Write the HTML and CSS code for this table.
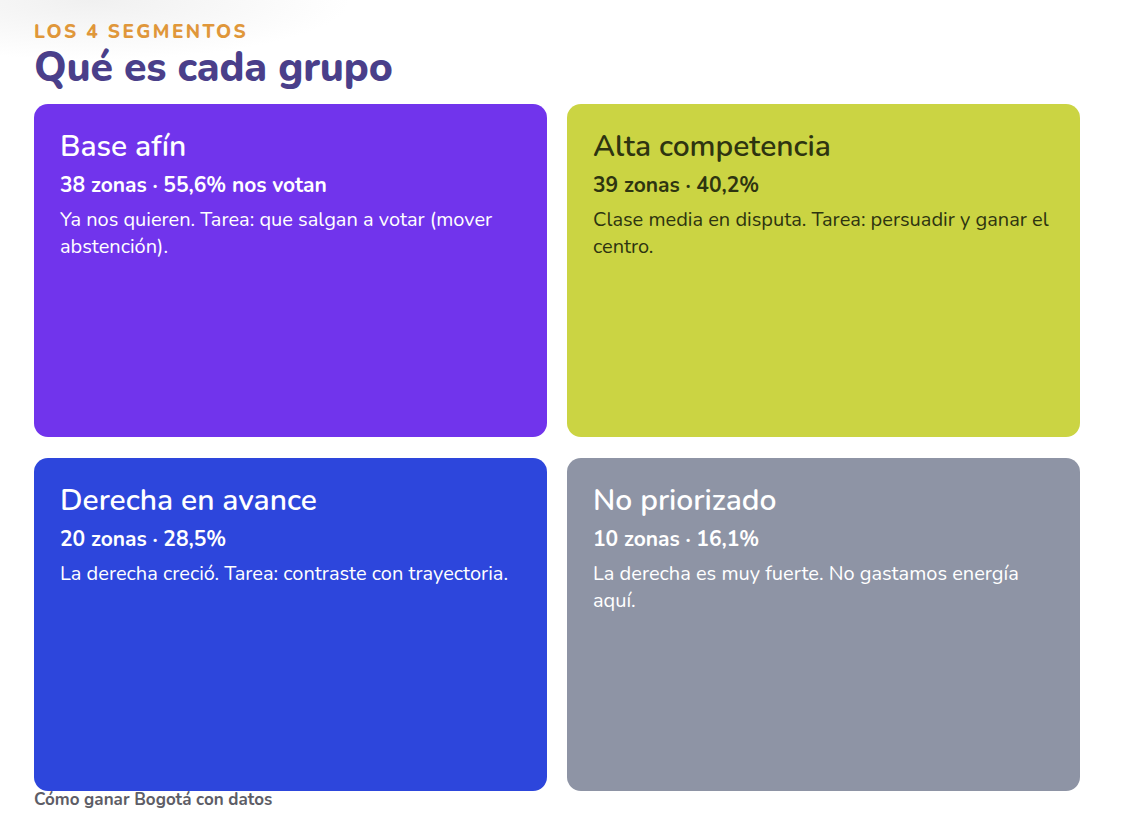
FILE: index.html
```html
<!DOCTYPE html>
<html lang="es">
<head>
<meta charset="utf-8">
<link rel="stylesheet" href="styles.css">
</head>
<body>
<main class="page">
  <header class="head">
    <div class="eyebrow">LOS 4 SEGMENTOS</div>
    <h1 class="title">Qué es cada grupo</h1>
  </header>
  <section class="grid">
    <article class="card card-purple">
      <h2 class="card-title">Base afín</h2>
      <div class="card-stats">38 zonas · 55,6% nos votan</div>
      <p class="card-desc">Ya nos quieren. Tarea: que salgan a votar (mover abstención).</p>
    </article>
    <article class="card card-lime">
      <h2 class="card-title">Alta competencia</h2>
      <div class="card-stats">39 zonas · 40,2%</div>
      <p class="card-desc">Clase media en disputa. Tarea: persuadir y ganar el centro.</p>
    </article>
    <article class="card card-blue">
      <h2 class="card-title">Derecha en avance</h2>
      <div class="card-stats">20 zonas · 28,5%</div>
      <p class="card-desc">La derecha creció. Tarea: contraste con trayectoria.</p>
    </article>
    <article class="card card-gray">
      <h2 class="card-title">No priorizado</h2>
      <div class="card-stats">10 zonas · 16,1%</div>
      <p class="card-desc">La derecha es muy fuerte. No gastamos energía aquí.</p>
    </article>
  </section>
  <footer class="foot">Cómo ganar Bogotá con datos</footer>
</main>
</body>
</html>
```
FILE: styles.css
```css
html, body {
  margin: 0;
  padding: 0;
  background: #ffffff;
}
body {
  font-family: "Nunito", "Noto Sans", "Open Sans", sans-serif;
  background: radial-gradient(ellipse 260px 60px at 90px 0px, #f0f0f0 0%, #ffffff 100%);
  width: 1126px;
  height: 828px;
  overflow: hidden;
}
.page {
  padding: 22px 46px 0 34px;
}
.eyebrow {
  color: #E0973A;
  font-weight: 800;
  font-size: 19px;
  letter-spacing: 2.4px;
  line-height: 20px;
}
.title {
  margin: 4px 0 0 0;
  color: #4A3F8A;
  font-weight: 800;
  font-size: 41px;
  line-height: 44px;
  letter-spacing: -0.2px;
}
.grid {
  margin-top: 14px;
  display: grid;
  grid-template-columns: 513px 513px;
  grid-template-rows: 333px 333px;
  column-gap: 20px;
  row-gap: 21px;
}
.card {
  border-radius: 14px;
  padding: 26px 26px;
  color: #ffffff;
}
.card-purple { background: #7134EC; }
.card-lime { background: #CBD443; color: #2E3410; }
.card-blue { background: #2D46DC; }
.card-gray { background: #8E94A5; }
.card-title {
  margin: 0;
  font-weight: 600;
  font-size: 30px;
  line-height: 34px;
}
.card-stats {
  margin-top: 8px;
  font-weight: 700;
  font-size: 21px;
  line-height: 26px;
}
.card-desc {
  margin: 8px 0 0 0;
  font-size: 20px;
  line-height: 27px;
  font-weight: 400;
}
.foot {
  margin-top: 0px;
  color: #5d5d66;
  font-weight: 700;
  font-size: 17px;
  line-height: 18px;
}
```
